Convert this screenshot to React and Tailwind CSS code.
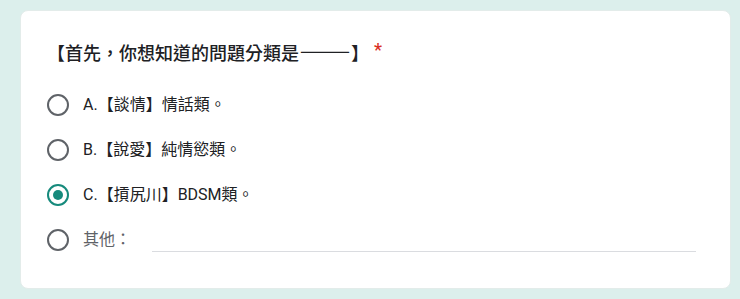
import React from "react";

const options = [
  { id: "a", label: "A.【談情】情話類。" },
  { id: "b", label: "B.【說愛】純情慾類。" },
  { id: "c", label: "C.【摃尻川】BDSM類。", checked: true },
];

const Radio = ({ checked }) => (
  <span
    className={`flex h-[22px] w-[22px] shrink-0 items-center justify-center rounded-full border-2 ${
      checked ? "border-[#168a7c]" : "border-[#5f6368]"
    }`}
  >
    {checked && <span className="h-[10px] w-[10px] rounded-full bg-[#168a7c]" />}
  </span>
);

export default function App() {
  return (
    <div className="h-[299px] w-[740px] bg-[#dcefec] pt-[10px] pl-[20px] pr-[9px] pb-[10px] font-['Roboto','Noto_Sans_CJK_TC',sans-serif]">
      <div className="h-full rounded-lg border border-[#e3ecea] bg-white pl-[26px] pr-[34px]">
        <h2 className="flex h-[51px] items-center pt-[27px] text-[18px] font-medium leading-6 text-[#202124] font-['Noto_Sans_CJK_TC',sans-serif]">
          <span className="[font-feature-settings:'fwid']">
            【首先，你想知道的問題分類是
            <span className="relative top-[2px] text-[26px] leading-none">——</span>】
          </span>
          <span className="ml-[5px] text-[#d93025] font-['Roboto',sans-serif]">*</span>
        </h2>

        <div className="mt-[20px] flex flex-col">
          {options.map((o) => (
            <label key={o.id} className="flex h-[45px] items-center gap-[14px]">
              <Radio checked={o.checked} />
              <span className="text-[16px] text-[#202124]">{o.label}</span>
            </label>
          ))}
          <label className="flex h-[45px] items-center gap-[14px]">
            <Radio />
            <span className="text-[16px] text-[#5f6368]">其他：</span>
            <span className="ml-[7px] mt-[24px] h-px flex-1 bg-[#dadce0]" />
          </label>
        </div>
      </div>
    </div>
  );
}
